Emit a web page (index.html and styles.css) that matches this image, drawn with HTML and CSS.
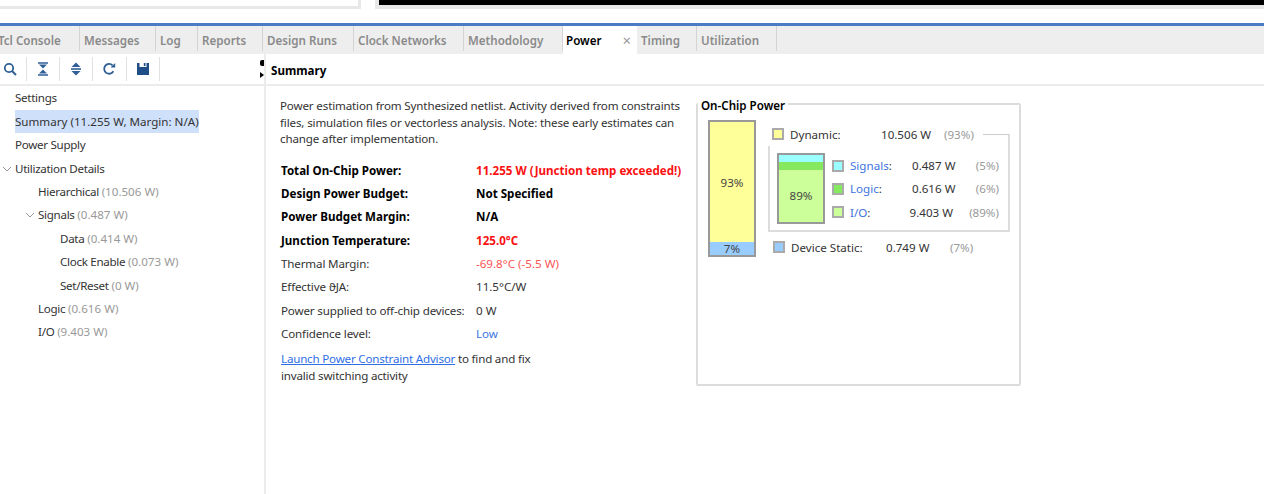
FILE: index.html
```html
<!DOCTYPE html>
<html lang="en">
<head>
    <meta charset="UTF-8">
    <title>Power</title>
    <link rel="stylesheet" href="styles.css">
</head>
<body>
    <!-- Windows above the tab pane, only their bottom edges show -->
    <div class="top-strip">
        <div class="top-window"></div>
        <div class="top-black"></div>
    </div>

    <nav class="tabs">
        <div class="tab tab-first">Tcl Console</div>
        <div class="tab">Messages</div>
        <div class="tab">Log</div>
        <div class="tab">Reports</div>
        <div class="tab">Design Runs</div>
        <div class="tab">Clock Networks</div>
        <div class="tab">Methodology</div>
        <div class="tab tab-active">Power<span class="tab-close">×</span></div>
        <div class="tab">Timing</div>
        <div class="tab">Utilization</div>
    </nav>

    <div class="pane">
        <aside class="sidebar">
            <div class="toolbar">
                <button class="tool">
                    <svg width="14" height="14" viewBox="0 0 14 14"><circle cx="6" cy="6" r="4.2" fill="none" stroke="#2f5f95" stroke-width="1.8"/><path d="M9 9l4 4" stroke="#2f5f95" stroke-width="2"/></svg>
                </button>
                <button class="tool">
                    <svg width="14" height="14" viewBox="0 0 14 14"><path d="M2 1h10M2 13h10" stroke="#2f5f95" stroke-width="1.6"/><path d="M3 2.5h8L7 6.5zM3 11.5h8L7 7.5z" fill="#2f5f95"/></svg>
                </button>
                <button class="tool">
                    <svg width="14" height="14" viewBox="0 0 14 14"><path d="M7 0.5L11.5 5h-9zM7 13.5L2.5 9h9z" fill="#2f5f95"/><path d="M2 7h10" stroke="#2f5f95" stroke-width="1.6"/></svg>
                </button>
                <button class="tool">
                    <svg width="14" height="14" viewBox="0 0 14 14"><path d="M11.4 9.2A4.9 4.9 0 1 1 10.6 3.4" fill="none" stroke="#2f5f95" stroke-width="1.8"/><path d="M8.5 5.6h4.7V1z" fill="#2f5f95"/></svg>
                </button>
                <button class="tool">
                    <svg width="14" height="14" viewBox="0 0 14 14"><path d="M1 1h2.5v4h7V1H13v12H1z" fill="#1f4f86"/><path d="M7.8 1h1.7v3H7.8z" fill="#1f4f86"/></svg>
                </button>
                <div class="handle">
                    <span class="handle-dot"></span>
                    <span class="handle-arrow"></span>
                </div>
            </div>

            <ul class="tree">
                <li class="node">Settings</li>
                <li class="node node-selected">Summary (11.255 W, Margin: N/A)</li>
                <li class="node">Power Supply</li>
                <li class="node"><svg class="chevron" width="10" height="6" viewBox="0 0 10 6"><path d="M1 1l4 4 4-4" fill="none" stroke="#999"/></svg>Utilization Details</li>
                <li class="node level-1">Hierarchical <span class="muted">(10.506 W)</span></li>
                <li class="node level-1"><svg class="chevron" width="10" height="6" viewBox="0 0 10 6"><path d="M1 1l4 4 4-4" fill="none" stroke="#999"/></svg>Signals <span class="muted">(0.487 W)</span></li>
                <li class="node level-2">Data <span class="muted">(0.414 W)</span></li>
                <li class="node level-2">Clock Enable <span class="muted">(0.073 W)</span></li>
                <li class="node level-2">Set/Reset <span class="muted">(0 W)</span></li>
                <li class="node level-1">Logic <span class="muted">(0.616 W)</span></li>
                <li class="node level-1">I/O <span class="muted">(9.403 W)</span></li>
            </ul>
        </aside>

        <main class="content">
            <h2 class="content-title">Summary</h2>
            <div class="content-body">
                <section class="summary">
                    <p class="intro">Power estimation from Synthesized netlist. Activity derived from constraints files, simulation files or vectorless analysis. Note: these early estimates can change after implementation.</p>
                    <dl class="facts">
                        <dt class="strong">Total On-Chip Power:</dt>
                        <dd class="strong danger">11.255 W (Junction temp exceeded!)</dd>
                        <dt class="strong">Design Power Budget:</dt>
                        <dd class="strong">Not Specified</dd>
                        <dt class="strong">Power Budget Margin:</dt>
                        <dd class="strong">N/A</dd>
                        <dt class="strong">Junction Temperature:</dt>
                        <dd class="strong danger">125.0°C</dd>
                        <dt>Thermal Margin:</dt>
                        <dd class="warn">-69.8°C (-5.5 W)</dd>
                        <dt>Effective ϑJA:</dt>
                        <dd>11.5°C/W</dd>
                        <dt>Power supplied to off-chip devices:</dt>
                        <dd>0 W</dd>
                        <dt>Confidence level:</dt>
                        <dd class="blue">Low</dd>
                    </dl>
                    <p class="advisor"><a href="#">Launch Power Constraint Advisor</a> to find and fix<br>invalid switching activity</p>
                </section>

                <section class="chip">
                    <h3 class="chip-title">On-Chip Power</h3>
                    <div class="chip-inner">
                        <div class="stack stack-main">
                            <div class="seg seg-dynamic">93%</div>
                            <div class="seg seg-static">7%</div>
                        </div>
                        <div class="breakdown">
                            <div class="row row-dynamic">
                                <span class="swatch c-dynamic"></span>
                                <span class="row-label">Dynamic:</span>
                                <span class="row-value">10.506 W</span>
                                <span class="row-pct muted">(93%)</span>
                                <span class="connector"></span>
                            </div>
                            <div class="group">
                                <div class="stack stack-small">
                                    <div class="seg seg-signals"></div>
                                    <div class="seg seg-logic"></div>
                                    <div class="seg seg-io">89%</div>
                                </div>
                                <div class="group-rows">
                                    <div class="row">
                                        <span class="swatch c-signals"></span>
                                        <span class="row-label"><span class="blue">Signals</span>:</span>
                                        <span class="row-value">0.487 W</span>
                                        <span class="row-pct muted">(5%)</span>
                                    </div>
                                    <div class="row">
                                        <span class="swatch c-logic"></span>
                                        <span class="row-label"><span class="blue">Logic</span>:</span>
                                        <span class="row-value">0.616 W</span>
                                        <span class="row-pct muted">(6%)</span>
                                    </div>
                                    <div class="row">
                                        <span class="swatch c-io"></span>
                                        <span class="row-label"><span class="blue">I/O</span>:</span>
                                        <span class="row-value">9.403 W</span>
                                        <span class="row-pct muted">(89%)</span>
                                    </div>
                                </div>
                            </div>
                            <div class="row row-static">
                                <span class="swatch c-static"></span>
                                <span class="row-label">Device Static:</span>
                                <span class="row-value">0.749 W</span>
                                <span class="row-pct muted">(7%)</span>
                            </div>
                        </div>
                    </div>
                </section>
            </div>
        </main>
    </div>
</body>
</html>
```

FILE: styles.css
```css
* {
    box-sizing: border-box;
}

html, body {
    height: 100%;
}

body {
    margin: 0;
    overflow: hidden;
    display: flex;
    flex-direction: column;
    font-family: "Noto Sans", "Open Sans", sans-serif;
    font-size: 11.6px;
    color: #333;
    background-color: white;
}

/* top strip */
.top-strip {
    height: 23px;
    flex: none;
    display: flex;
    gap: 14px;
    align-items: flex-start;
}

.top-window {
    width: 361px;
    height: 9px;
    border-right: 3px solid #e8e8e8;
    border-bottom: 3px solid #e8e8e8;
}

.top-black {
    flex: 1;
    height: 9px;
    background-color: black;
    border-left: 4px solid #e8e8e8;
    border-bottom: 4px solid #e8e8e8;
}

/* tabs */
.tabs {
    flex: none;
    height: 31px;
    display: grid;
    grid-template-columns: 80px 76px 42px 65px 91px 110px 99px 74px 60px 80px;
    border-top: 3px solid #4a7cc6;
    background-color: #eeeeee;
}

.tab {
    display: flex;
    align-items: center;
    padding: 3px 0 0 4px;
    margin-bottom: 3px;
    border-right: 1px solid #d4d4d4;
    font-weight: 600;
    color: #8a8a8a;
}

.tab-first {
    padding-left: 0;
    margin-left: -2px;
}

.tab-active {
    margin-bottom: 0;
    padding: 3px 6px 3px 3px;
    background-color: white;
    color: black;
    justify-content: space-between;
    border-right: none;
}

.tab-close {
    font-weight: 400;
    font-size: 15px;
    color: #999;
}

/* main pane */
.pane {
    flex: 1;
    min-height: 0;
    display: flex;
}

.sidebar {
    width: 266px;
    flex: none;
    border-right: 2px solid #ececec;
}

.toolbar {
    height: 32px;
    display: flex;
    align-items: center;
    border-bottom: 2px solid #ececec;
}

.tool {
    width: 33.4px;
    height: 24px;
    flex: none;
    display: flex;
    align-items: center;
    justify-content: center;
    padding: 0;
    background: none;
    border: none;
    border-right: 1px solid #e2e2e2;
}

.tool:first-child {
    width: 26.5px;
    padding-right: 5px;
}

.handle {
    margin-left: auto;
    width: 6px;
    height: 18px;
    display: flex;
    flex-direction: column;
    justify-content: space-between;
    align-items: flex-end;
}

.handle-dot {
    width: 4px;
    height: 6px;
    border-radius: 2px 0 0 2px;
    background-color: black;
}

.handle-arrow {
    width: 0;
    height: 0;
    border-top: 3px solid transparent;
    border-bottom: 3px solid transparent;
    border-left: 4px solid black;
}

/* tree */
.tree {
    list-style: none;
    margin: 0;
    padding: 0.4px 0 0;
}

.node {
    height: 23.4px;
    line-height: 23.4px;
    margin-left: 15px;
    width: fit-content;
    letter-spacing: -0.3px;
    white-space: nowrap;
    position: relative;
}

.node-selected {
    letter-spacing: 0;
    background-color: #cfe0fb;
}

.level-1 {
    margin-left: 38px;
}

.level-2 {
    margin-left: 60px;
}

.chevron {
    position: absolute;
    left: -13px;
    top: 9px;
}

.muted {
    letter-spacing: 0;
    color: #999;
}

/* content */
.content {
    flex: 1;
    min-width: 0;
}

.content-title {
    height: 32px;
    margin: 0;
    padding-left: 5px;
    font-size: 11.6px;
    font-weight: 700;
    line-height: 33px;
    color: black;
    border-bottom: 2px solid #ececec;
}

.content-body {
    display: flex;
    align-items: flex-start;
    gap: 14px;
    padding: 12px 0 0 14px;
}

.summary {
    width: 402px;
    flex: none;
}

.intro {
    margin: 0;
    line-height: 16.5px;
    letter-spacing: -0.15px;
}

.facts {
    display: grid;
    grid-template-columns: 195px 1fr;
    grid-auto-rows: 23.35px;
    line-height: 23.35px;
    margin: 11px 0 0 1px;
    white-space: nowrap;
}

.facts dd {
    margin: 0;
}

.facts dt {
    letter-spacing: -0.15px;
}

.facts dt.strong {
    letter-spacing: 0;
}

.strong {
    font-weight: 700;
    color: black;
}

.danger {
    color: #fa1111;
}

.warn {
    color: #f95555;
}

.blue {
    color: #3d74e0;
}

.advisor {
    margin: 5px 0 0 1px;
    line-height: 17px;
    letter-spacing: -0.2px;
}

.advisor a {
    color: #2e6fe6;
}

/* on-chip power box */
.chip {
    width: 325px;
    height: 283px;
    flex: none;
    margin-top: 5px;
    padding: 0 10px;
    border: 2px solid #dcdcdc;
    border-radius: 2px;
}

.chip-title {
    display: table;
    height: 16px;
    margin: -7.5px 0 0 -10px;
    padding: 0 3px;
    font-size: 11.6px;
    font-weight: 600;
    line-height: 16px;
    color: black;
    background-color: white;
}

.chip-inner {
    display: flex;
    gap: 12px;
    margin-top: 6.5px;
}

.stack {
    display: flex;
    flex-direction: column;
    flex: none;
    border: 2px solid #999;
    color: #444;
}

.stack-main {
    width: 48px;
    height: 137px;
}

.stack-small {
    width: 48px;
    height: 71px;
}

.seg {
    display: flex;
    align-items: center;
    justify-content: center;
}

.seg-dynamic {
    flex: 1;
    background-color: #ffff99;
}

.seg-static {
    height: 13px;
    background-color: #99ccff;
}

.seg-signals {
    height: 7px;
    background-color: #99ffff;
}

.seg-logic {
    height: 8px;
    background-color: #85e85f;
}

.seg-io {
    flex: 1;
    background-color: #ccff99;
}

.breakdown {
    width: 242px;
    margin-top: 2.5px;
}

.row {
    display: flex;
    align-items: center;
    height: 23.3px;
    white-space: nowrap;
}

.swatch {
    width: 12px;
    height: 12px;
    flex: none;
    border: 2px solid #aaa;
}

.c-dynamic { background-color: #ffff99; }
.c-static { background-color: #99ccff; }
.c-signals { background-color: #99ffff; }
.c-logic { background-color: #85e85f; }
.c-io { background-color: #ccff99; }

.row-label {
    margin-left: 6px;
    width: 62px;
}

.row-value {
    width: 62px;
}

.row-pct {
    flex: 1;
    text-align: right;
}

.row-dynamic {
    height: 23px;
    padding-left: 4px;
}

.row-dynamic .row-label {
    width: 91px;
}

.row-dynamic .row-value {
    width: 63px;
}

.row-dynamic .row-pct {
    flex: none;
    text-align: left;
    width: 39px;
}

.connector {
    flex: 1;
    align-self: flex-end;
    height: 12px;
    border-top: 1px solid #ccc;
    border-right: 2px solid #dcdcdc;
}

.group {
    height: 86px;
    display: flex;
    gap: 7px;
    padding: 7px 9px 0 7px;
    border: 2px solid #dcdcdc;
    border-top: none;
}

.group-rows {
    flex: 1;
    min-width: 0;
    margin-top: 1.4px;
}

.row-static {
    margin-top: 4px;
    padding-left: 5px;
}

.row-static .row-label {
    width: 95px;
}

.row-static .row-value {
    width: 64px;
}

.row-static .row-pct {
    flex: none;
    text-align: left;
}
```
